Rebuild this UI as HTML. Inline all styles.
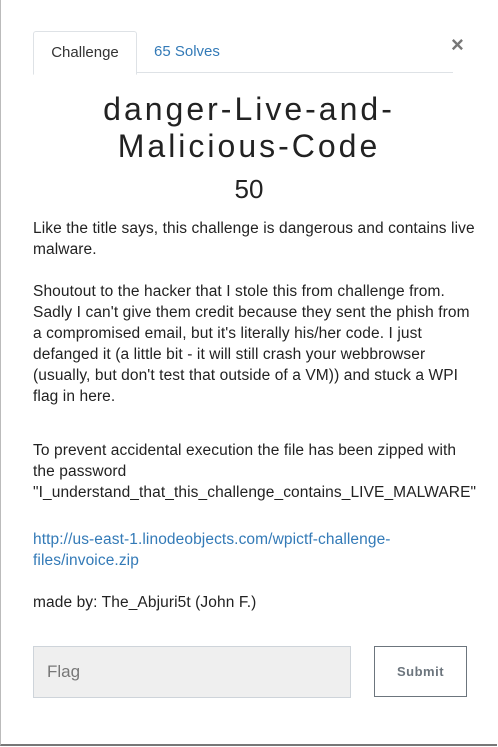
<!DOCTYPE html>
<html><head><style>
body{margin:0;width:498px;height:747px;background:#fff;font-family:"Liberation Sans",sans-serif;overflow:hidden;position:relative}
.frame{position:absolute;left:0;top:-2px;width:496px;height:746px;border-left:1px solid #bbb;border-bottom:2px solid #777}
.tabs{position:absolute;left:33px;top:72px;width:420px;border-bottom:1px solid #dee2e6}
.tab1{position:absolute;left:33px;top:31px;width:102px;height:42px;border:1px solid #dee2e6;border-bottom:1px solid #fff;border-radius:3px 3px 0 0;background:#fff;font-size:15px;color:#333;text-align:center;line-height:42px}
.tab2{position:absolute;left:154px;top:31px;line-height:42px;font-size:15px;color:#337ab7}
.x{position:absolute;left:451px;top:32px;font-size:22px;color:#777;font-weight:bold}
h1{position:absolute;left:0;width:498px;top:91px;margin:0;text-align:center;font-weight:normal;font-size:32px;line-height:37px;letter-spacing:3px;color:#222}
.pts{position:absolute;left:0;width:498px;top:174px;text-align:center;font-size:26px;color:#222}
p{position:absolute;left:33px;width:460px;margin:0;font-size:15.5px;line-height:21px;color:#222;letter-spacing:0.1px;white-space:nowrap}
a{color:#337ab7;text-decoration:none}
.in{position:absolute;left:33px;top:646px;background:#efefef;border:1px solid #ced4da;font-size:17px;color:#777;line-height:50px;box-sizing:border-box;padding-left:13px;width:318px;height:52px}
.btn{position:absolute;left:374px;top:646px;width:93px;height:51px;border:1px solid #6c757d;box-sizing:border-box;text-align:center;line-height:49px;font-size:13px;font-weight:bold;color:#6c757d;letter-spacing:.5px}
</style></head><body>
<div class="frame"></div>
<div class="tabs"></div>
<div class="tab1">Challenge</div>
<div class="tab2">65 Solves</div>
<div class="x">×</div>
<h1>danger-Live-and-<br>Malicious-Code</h1>
<div class="pts">50</div>
<p style="top:218px">Like the title says, this challenge is dangerous and contains live<br>malware.</p>
<p style="top:281px">Shoutout to the hacker that I stole this from challenge from.<br>Sadly I can't give them credit because they sent the phish from<br>a compromised email, but it's literally his/her code. I just<br>defanged it (a little bit - it will still crash your webbrowser<br>(usually, but don't test that outside of a VM)) and stuck a WPI<br>flag in here.</p>
<p style="top:440px">To prevent accidental execution the file has been zipped with<br>the password<br>"I_understand_that_this_challenge_contains_LIVE_MALWARE"</p>
<p style="top:529px"><a>http://us-east-1.linodeobjects.com/wpictf-challenge-<br>files/invoice.zip</a></p>
<p style="top:592px">made by: The_Abjuri5t (John F.)</p>
<div class="in">Flag</div>
<div class="btn">Submit</div>
</body></html>
